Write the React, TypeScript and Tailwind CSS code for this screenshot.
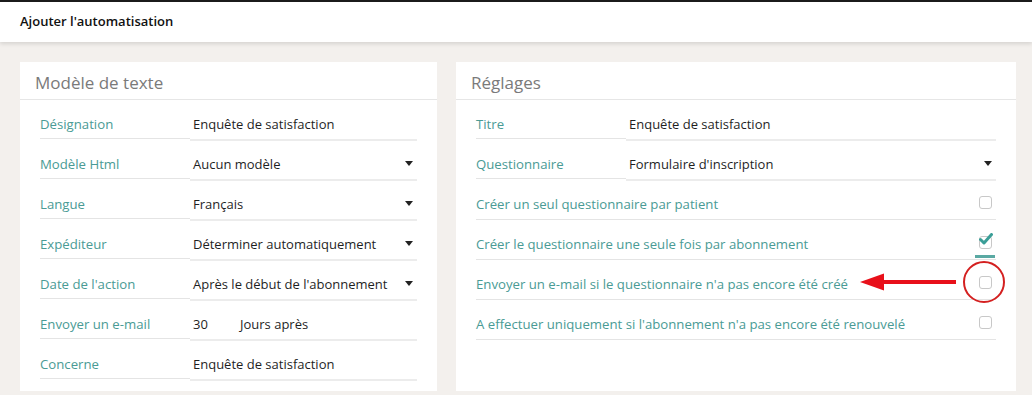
import { ReactNode } from "react"

const font = { fontFamily: '"Open Sans", "Noto Sans", sans-serif' }

function Caret() {
    return (
        <svg width="8" height="5" viewBox="0 0 8 5" className="shrink-0">
            <path d="M0 0 L8 0 L4 5 Z" fill="#222" />
        </svg>
    )
}

function Row({ label, children, select }: { label: string; children: ReactNode; select?: boolean }) {
    return (
        <div className="flex h-[40px]">
            <div className="w-[150px] h-[39px] shrink-0 border-b border-[#e4e4e4] pt-[13px] text-[13.2px] leading-[22px] text-[#4a9b95]">
                {label}
            </div>
            <div className="flex-1 h-[41px] border-b-2 border-[#ececec] pt-[13px] pl-[3px] pr-[4px] flex items-start justify-between text-[13px] leading-[22px] text-[#1f1f1f]">
                <div className="flex">{children}</div>
                {select && (
                    <div className="pt-[8px]">
                        <Caret />
                    </div>
                )}
            </div>
        </div>
    )
}

function CheckRow({ label, checked, annotated }: { label: string; checked?: boolean; annotated?: boolean }) {
    return (
        <div className="flex h-[40px] border-b border-[#e4e4e4] items-start">
            <div className="flex-1 pt-[13px] text-[13.2px] leading-[22px] text-[#4a9b95]">{label}</div>
            <div className="relative w-[20px] h-[40px] mr-[1px] flex justify-center pt-[16px]">
                <div className="w-[13px] h-[13px] rounded-[3px] border border-[#c8c8c8] bg-white" />
                {checked && (
                    <>
                        <svg width="14" height="12" viewBox="0 0 14 12" className="absolute left-[4px] top-[13px]">
                            <path d="M1.5 6.5 L5 10 L12.5 1.5" stroke="#3a9e97" strokeWidth="3" fill="none" strokeLinecap="round" strokeLinejoin="round" />
                        </svg>
                        <div className="absolute left-0 right-0 bottom-[2px] h-[3px] bg-[#5aa9a3]" />
                    </>
                )}
                {annotated && (
                    <>
                        <div className="absolute left-[-12px] top-[1px] w-[42px] h-[42px] rounded-full border-2 border-[#d42020]" />
                        <svg width="100" height="20" viewBox="0 0 100 20" className="absolute left-[-115px] top-[12px]">
                            <path d="M24 8 L96 8 L96 12 L24 12 Z" fill="#e8101a" />
                            <path d="M0 10 L24 1.5 L24 18.5 Z" fill="#e8101a" />
                        </svg>
                    </>
                )}
            </div>
        </div>
    )
}

function Card({ title, children, className }: { title: string; children: ReactNode; className?: string }) {
    return (
        <div className={"bg-white flex flex-col " + (className ?? "")}>
            <div className="h-[38px] border-b border-[#e6e6e6] pl-[15px] pt-[8px] text-[17px] leading-[26px] text-[#7a7a7a]">
                {title}
            </div>
            <div className="px-[20px]">{children}</div>
        </div>
    )
}

export default function App() {
    return (
        <div className="w-[1032px] h-[395px] bg-[#f3f0ed] overflow-hidden" style={font}>
            <div className="h-[2px] bg-[#1c1c1c]" />
            <div className="h-[40px] bg-white shadow-[0_2px_4px_rgba(0,0,0,0.12)] pl-[20px] flex items-center text-[13px] font-semibold text-[#111]">
                Ajouter l'automatisation
            </div>
            <div className="flex gap-[19px] pl-[20px] pt-[20px]">
                <Card title="Modèle de texte" className="w-[417px] h-[329px]">
                    <Row label="Désignation">Enquête de satisfaction</Row>
                    <Row label="Modèle Html" select>Aucun modèle</Row>
                    <Row label="Langue" select>Français</Row>
                    <Row label="Expéditeur" select>Déterminer automatiquement</Row>
                    <Row label="Date de l'action" select>Après le début de l'abonnement</Row>
                    <Row label="Envoyer un e-mail">
                        <span className="w-[47px]">30</span>
                        <span>Jours après</span>
                    </Row>
                    <Row label="Concerne">Enquête de satisfaction</Row>
                </Card>
                <Card title="Réglages" className="w-[560px] h-[329px]">
                    <Row label="Titre">Enquête de satisfaction</Row>
                    <Row label="Questionnaire" select>Formulaire d'inscription</Row>
                    <CheckRow label="Créer un seul questionnaire par patient" />
                    <CheckRow label="Créer le questionnaire une seule fois par abonnement" checked />
                    <CheckRow label="Envoyer un e-mail si le questionnaire n'a pas encore été créé" annotated />
                    <CheckRow label="A effectuer uniquement si l'abonnement n'a pas encore été renouvelé" />
                </Card>
            </div>
        </div>
    )
}
